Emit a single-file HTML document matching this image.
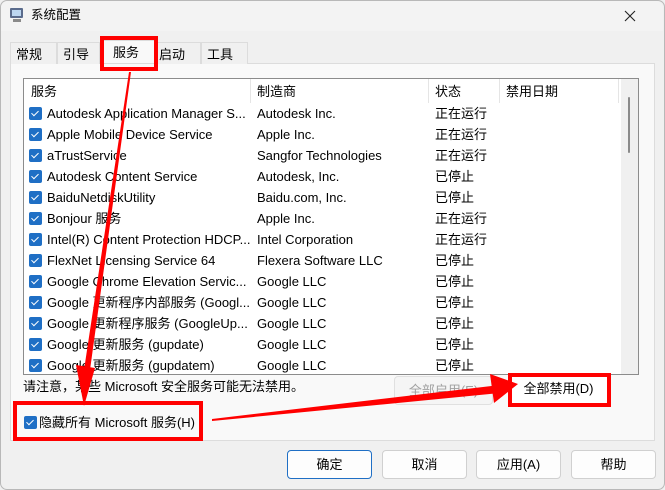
<!DOCTYPE html>
<html><head><meta charset="utf-8"><style>
*{margin:0;padding:0;box-sizing:border-box}
body{width:665px;height:490px;overflow:hidden;background:#f0f0f0;font-family:"Liberation Sans","Noto Sans CJK SC",sans-serif;font-size:13px;line-height:17px;color:#000;position:relative}
.a{position:absolute}
.win{left:0;top:0;width:665px;height:490px;border:1px solid #b8b8b8;border-radius:7px;background:#f0f0f0}
.title{left:1px;top:1px;width:662px;height:30px;background:#f3f3f3;border-radius:7px 7px 0 0}
.tab{top:42px;height:22px;border:1px solid #dcdcdc;border-bottom:none;background:#f0f0f0;font-size:13px;padding:3px 0 0 5px;line-height:17px}
.panel{left:10px;top:63px;width:645px;height:378px;background:#f9f9f9;border:1px solid #dcdcdc}
.list{left:23px;top:78px;width:616px;height:297px;background:#fff;border:1px solid #8c8c8c;overflow:hidden}
.row{position:absolute;left:0;height:21px;width:600px;white-space:nowrap}
.row span{position:absolute;top:2px;line-height:17px;height:17px}
.cb{position:absolute;left:5px;top:4px;width:13px;height:13px;background:#1f6fc5;border-radius:2px}
.cb:after{content:"";position:absolute;left:4px;top:1.5px;width:3px;height:6px;border:solid #fff;border-width:0 1.3px 1.3px 0;transform:rotate(45deg)}
.btn{height:29px;border:1px solid #d0d0d0;background:#fdfdfd;border-radius:4px;text-align:center;line-height:27px;font-size:13px}
</style></head><body>
<div class="a win"></div>
<div class="a title"></div>
<svg class="a" style="left:9px;top:7px" width="16" height="16"><rect x="1" y="1" width="13" height="10" fill="#5a6b8c" rx="1"/><rect x="3" y="3" width="9" height="6" fill="#bcd6f0"/><rect x="4" y="12" width="8" height="3" fill="#8a8a8a"/></svg>
<div class="a" style="left:31px;top:7px;font-size:12.5px">系统配置</div>
<svg class="a" style="left:623px;top:9px" width="14" height="14"><path d="M2 2L12 12M12 2L2 12" stroke="#222" stroke-width="1.1"/></svg>
<div class="a panel"></div>
<div class="a tab" style="left:10px;width:47px">常规</div>
<div class="a tab" style="left:57px;width:43px">引导</div>
<div class="a tab" style="left:100px;width:55px;background:#f9f9f9;height:23px;top:40px;padding-left:12px">服务</div>
<div class="a tab" style="left:155px;width:46px;padding-left:3px">启动</div>
<div class="a tab" style="left:201px;width:47px">工具</div>
<div class="a list">
<div class="row" style="top:0;height:24px"><span style="left:7px;top:4px">服务</span><span style="left:233px;top:4px">制造商</span><span style="left:411px;top:4px">状态</span><span style="left:482px;top:4px">禁用日期</span>
<div class="a" style="left:226px;top:0;width:1px;height:24px;background:#e5e5e5"></div><div class="a" style="left:404px;top:0;width:1px;height:24px;background:#e5e5e5"></div><div class="a" style="left:475px;top:0;width:1px;height:24px;background:#e5e5e5"></div><div class="a" style="left:594px;top:0;width:1px;height:24px;background:#e5e5e5"></div></div>
<div class="a" style="left:597px;top:0;width:18px;height:297px;background:#f0f0f0"></div>
<div class="a" style="left:604px;top:18px;width:2px;height:56px;background:#8a8a8a;border-radius:1px"></div>
<div id="rows"></div>
</div>
<script>
var d=[["Autodesk Application Manager S...","Autodesk Inc.","正在运行"],["Apple Mobile Device Service","Apple Inc.","正在运行"],["aTrustService","Sangfor Technologies","正在运行"],["Autodesk Content Service","Autodesk, Inc.","已停止"],["BaiduNetdiskUtility","Baidu.com, Inc.","已停止"],["Bonjour 服务","Apple Inc.","正在运行"],["Intel(R) Content Protection HDCP...","Intel Corporation","正在运行"],["FlexNet Licensing Service 64","Flexera Software LLC","已停止"],["Google Chrome Elevation Servic...","Google LLC","已停止"],["Google 更新程序内部服务 (Googl...","Google LLC","已停止"],["Google 更新程序服务 (GoogleUp...","Google LLC","已停止"],["Google 更新服务 (gupdate)","Google LLC","已停止"],["Google 更新服务 (gupdatem)","Google LLC","已停止"],["","","已停止"]];
var h="";d.forEach(function(r,i){h+='<div class="row" style="top:'+(24+i*21)+'px">'+(r[0]?'<div class="cb"></div>':'')+'<span style="left:23px">'+r[0]+'</span><span style="left:233px">'+r[1]+'</span><span style="left:411px">'+r[2]+'</span></div>'});document.getElementById("rows").innerHTML=h;
</script>
<div class="a" style="left:23px;top:378px">请注意，某些 Microsoft 安全服务可能无法禁用。</div>
<div class="a btn" style="left:394px;top:376px;width:99px;color:#a0a0a0;border-color:#e0e0e0;background:#f5f5f5">全部启用(E)</div>
<div class="a btn" style="left:510px;top:375px;width:97px;border:none;background:#fff">全部禁用(D)</div>
<div class="a cb" style="left:24px;top:416px"></div>
<div class="a" style="left:39px;top:414px">隐藏所有 Microsoft 服务(H)</div>
<div class="a btn" style="left:287px;top:450px;width:85px;border:1px solid #1f6fc5">确定</div>
<div class="a btn" style="left:382px;top:450px;width:85px">取消</div>
<div class="a btn" style="left:476px;top:450px;width:85px">应用(A)</div>
<div class="a btn" style="left:571px;top:450px;width:85px">帮助</div>
<svg class="a" style="left:0;top:0" width="665" height="490">
<g fill="none" stroke="#f00" stroke-width="4"><rect x="102" y="38" width="54" height="31"/><rect x="510" y="375" width="99" height="30"/><rect x="15" y="403" width="186" height="36"/></g>
<polygon points="129,72 131,72 90,370 84,370" fill="#f00"/>
<polygon points="76,365 95,368 84,406" fill="#f00"/>
<polygon points="212,419 500,385 500,393 212,421" fill="#f00"/>
<polygon points="490,374 518,384 494,403" fill="#f00"/>
</svg>
</body></html>
